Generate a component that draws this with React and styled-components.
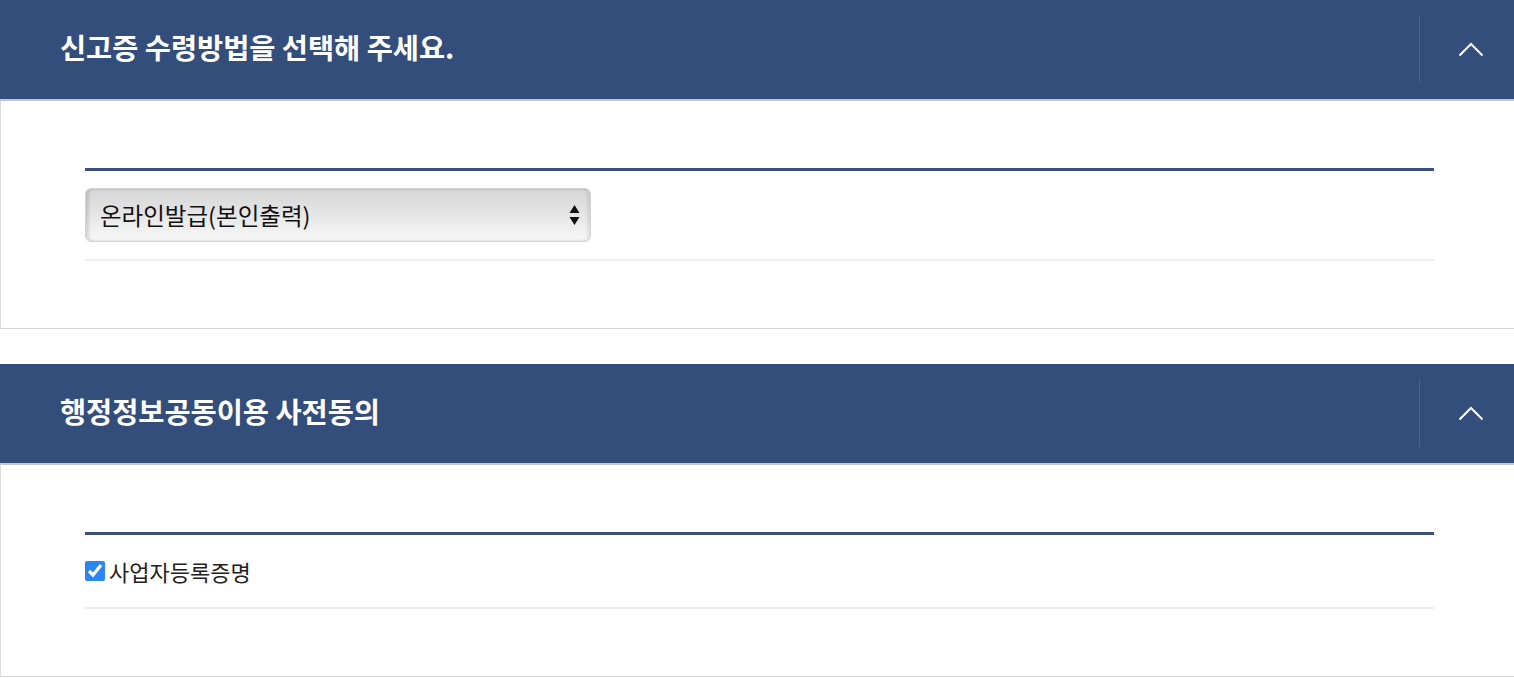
import { useState } from "react"
import styled, { createGlobalStyle } from "styled-components"

const GlobalStyle = createGlobalStyle`
  body {
    margin: 0;
    background: #fff;
    font-family: "Noto Sans CJK KR", "Noto Sans", sans-serif;
  }
`

const Page = styled.div`
  display: flex;
  flex-direction: column;
  gap: 35px;
`

const Section = styled.section`
  display: flex;
  flex-direction: column;
`

const Header = styled.div`
  display: flex;
  align-items: center;
  height: 99px;
  background-color: #344e7b;
  border-bottom: 2px solid #c3c9d4;
`

const Title = styled.h2`
  flex: 1;
  margin: 0;
  padding: 0 0 6px 60px;
  font-size: 28.4px;
  font-weight: 700;
  letter-spacing: 0;
  color: #fff;
`

const Divider = styled.span`
  width: 1px;
  height: 67px;
  background-color: #4b6290;
`

const ToggleButton = styled.button`
  display: flex;
  align-items: center;
  justify-content: center;
  width: 94px;
  height: 100%;
  padding: 0 0 0 8px;
  border: none;
  background: transparent;
  cursor: pointer;
`

const Body = styled.div`
  padding: 67px 80px 67px 84px;
  background: #fff;
  border-left: 1px solid #dcdcdc;
  border-bottom: 1px solid #d6d6d6;
`

const Table = styled.div`
  border-top: 3px solid #3a507e;
  border-bottom: 2px solid #eeeeee;
`

const Row = styled.div`
  display: flex;
  align-items: center;
  padding: ${(p) => p.$pad}px 0;
  min-height: ${(p) => p.$h}px;
`

const SelectWrap = styled.div`
  position: relative;
  width: 506px;
  height: 54px;
`

const Select = styled.select`
  appearance: none;
  width: 100%;
  height: 100%;
  padding: 0 40px 0 14px;
  border: 1px solid #d2d2d2;
  border-radius: 6px;
  background: linear-gradient(#d6d6d6 0%, #e4e4e4 45%, #efefef 75%, #f8f8f8 100%);
  box-shadow: inset 3px 0 3px rgba(0, 0, 0, 0.12), inset -3px 0 3px rgba(0, 0, 0, 0.08);
  font-family: "Noto Sans CJK KR", sans-serif;
  font-size: 23.5px;
  color: #111;
  outline: none;
`

const Arrows = styled.span`
  position: absolute;
  right: 11px;
  top: 50%;
  transform: translateY(-50%);
  display: flex;
  pointer-events: none;
`

const CheckLabel = styled.label`
  display: flex;
  align-items: center;
  gap: 4px;
  font-size: 22px;
  color: #222;
  cursor: pointer;
`

const Check = styled.input`
  width: 20px;
  height: 20px;
  margin: 0;
  accent-color: #2a86f5;
`

const Chevron = () => (
  <svg width="26" height="15" viewBox="0 0 26 15">
    <path d="M1.5 13.5 L13 2 L24.5 13.5" fill="none" stroke="#fff" strokeWidth="2" />
  </svg>
)

const Panel = ({ title, children }) => (
  <Section>
    <Header>
      <Title>{title}</Title>
      <Divider />
      <ToggleButton aria-label="접기">
        <Chevron />
      </ToggleButton>
    </Header>
    <Body>
      <Table>{children}</Table>
    </Body>
  </Section>
)

export default function App() {
  const [method, setMethod] = useState("online")
  const [agree, setAgree] = useState(true)

  return (
    <Page>
      <GlobalStyle />
      <Panel title="신고증 수령방법을 선택해 주세요.">
        <Row $pad={17} $h={54}>
          <SelectWrap>
            <Select value={method} onChange={(e) => setMethod(e.target.value)}>
              <option value="online">온라인발급(본인출력)</option>
              <option value="visit">방문수령</option>
              <option value="mail">우편수령</option>
            </Select>
            <Arrows>
              <svg width="11" height="24" viewBox="0 0 11 24">
                <path d="M5.5 2 L10.5 10 L0.5 10 Z M0.5 14 L10.5 14 L5.5 22 Z" fill="#111" />
              </svg>
            </Arrows>
          </SelectWrap>
        </Row>
      </Panel>
      <Panel title="행정정보공동이용 사전동의">
        <Row $pad={17} $h={38}>
          <CheckLabel>
            <Check type="checkbox" checked={agree} onChange={(e) => setAgree(e.target.checked)} />
            사업자등록증명
          </CheckLabel>
        </Row>
      </Panel>
    </Page>
  )
}
